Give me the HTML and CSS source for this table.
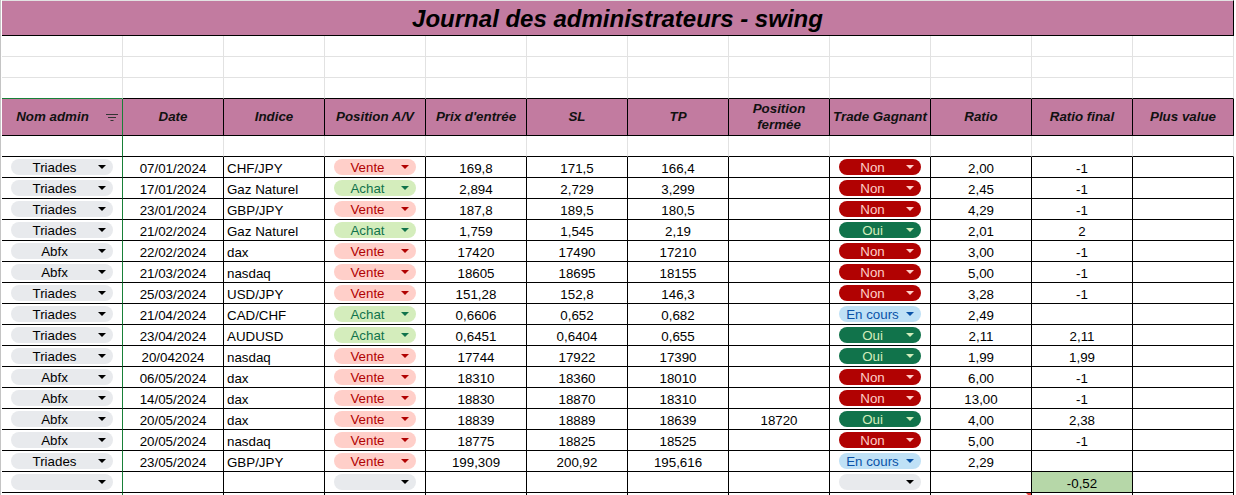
FILE: index.html
```html
<!DOCTYPE html>
<html lang="fr">
<head>
<meta charset="utf-8">
<title>Journal des administrateurs - swing</title>
<link rel="stylesheet" href="styles.css">
</head>
<body>
<div class="sheet">
  <div class="title">Journal des administrateurs - swing</div>

  <div class="row blank"><div class="c"></div><div class="c"></div><div class="c"></div><div class="c"></div><div class="c"></div><div class="c"></div><div class="c"></div><div class="c"></div><div class="c"></div><div class="c"></div><div class="c"></div><div class="c"></div></div>
  <div class="row blank"><div class="c"></div><div class="c"></div><div class="c"></div><div class="c"></div><div class="c"></div><div class="c"></div><div class="c"></div><div class="c"></div><div class="c"></div><div class="c"></div><div class="c"></div><div class="c"></div></div>
  <div class="row blank last"><div class="c hb"></div><div class="c"></div><div class="c"></div><div class="c"></div><div class="c"></div><div class="c"></div><div class="c"></div><div class="c"></div><div class="c"></div><div class="c"></div><div class="c"></div><div class="c"></div></div>

  <div class="row head">
    <div class="c a"><span class="ht">Nom admin</span><svg class="filter" viewBox="0 0 12 7"><path d="M0 0.5h12M2 3.5h8M4.5 6.5h3"/></svg></div>
    <div class="c">Date</div>
    <div class="c">Indice</div>
    <div class="c">Position A/V</div>
    <div class="c">Prix d'entrée</div>
    <div class="c">SL</div>
    <div class="c">TP</div>
    <div class="c">Position<br>fermée</div>
    <div class="c">Trade Gagnant</div>
    <div class="c">Ratio</div>
    <div class="c">Ratio final</div>
    <div class="c">Plus value</div>
  </div>

  <div class="row spacer"><div class="c a"></div><div class="c"></div><div class="c"></div><div class="c"></div><div class="c"></div><div class="c"></div><div class="c"></div><div class="c"></div><div class="c"></div><div class="c"></div><div class="c"></div><div class="c"></div></div>

  <div class="row">
    <div class="c a k"><span class="chip gray"><span class="t">Triades</span><svg class="arr" viewBox="0 0 8 4"><path d="M0 0h8L4 4z"/></svg></span></div>
    <div class="c">07/01/2024</div><div class="c l">CHF/JPY</div>
    <div class="c k"><span class="chip vente"><span class="t">Vente</span><svg class="arr" viewBox="0 0 8 4"><path d="M0 0h8L4 4z"/></svg></span></div>
    <div class="c">169,8</div><div class="c">171,5</div><div class="c">166,4</div><div class="c"></div>
    <div class="c k"><span class="chip non"><span class="t">Non</span><svg class="arr" viewBox="0 0 8 4"><path d="M0 0h8L4 4z"/></svg></span></div>
    <div class="c">2,00</div><div class="c">-1</div><div class="c"></div>
  </div>
  <div class="row">
    <div class="c a k"><span class="chip gray"><span class="t">Triades</span><svg class="arr" viewBox="0 0 8 4"><path d="M0 0h8L4 4z"/></svg></span></div>
    <div class="c">17/01/2024</div><div class="c l">Gaz Naturel</div>
    <div class="c k"><span class="chip achat"><span class="t">Achat</span><svg class="arr" viewBox="0 0 8 4"><path d="M0 0h8L4 4z"/></svg></span></div>
    <div class="c">2,894</div><div class="c">2,729</div><div class="c">3,299</div><div class="c"></div>
    <div class="c k"><span class="chip non"><span class="t">Non</span><svg class="arr" viewBox="0 0 8 4"><path d="M0 0h8L4 4z"/></svg></span></div>
    <div class="c">2,45</div><div class="c">-1</div><div class="c"></div>
  </div>
  <div class="row">
    <div class="c a k"><span class="chip gray"><span class="t">Triades</span><svg class="arr" viewBox="0 0 8 4"><path d="M0 0h8L4 4z"/></svg></span></div>
    <div class="c">23/01/2024</div><div class="c l">GBP/JPY</div>
    <div class="c k"><span class="chip vente"><span class="t">Vente</span><svg class="arr" viewBox="0 0 8 4"><path d="M0 0h8L4 4z"/></svg></span></div>
    <div class="c">187,8</div><div class="c">189,5</div><div class="c">180,5</div><div class="c"></div>
    <div class="c k"><span class="chip non"><span class="t">Non</span><svg class="arr" viewBox="0 0 8 4"><path d="M0 0h8L4 4z"/></svg></span></div>
    <div class="c">4,29</div><div class="c">-1</div><div class="c"></div>
  </div>
  <div class="row">
    <div class="c a k"><span class="chip gray"><span class="t">Triades</span><svg class="arr" viewBox="0 0 8 4"><path d="M0 0h8L4 4z"/></svg></span></div>
    <div class="c">21/02/2024</div><div class="c l">Gaz Naturel</div>
    <div class="c k"><span class="chip achat"><span class="t">Achat</span><svg class="arr" viewBox="0 0 8 4"><path d="M0 0h8L4 4z"/></svg></span></div>
    <div class="c">1,759</div><div class="c">1,545</div><div class="c">2,19</div><div class="c"></div>
    <div class="c k"><span class="chip oui"><span class="t">Oui</span><svg class="arr" viewBox="0 0 8 4"><path d="M0 0h8L4 4z"/></svg></span></div>
    <div class="c">2,01</div><div class="c">2</div><div class="c"></div>
  </div>
  <div class="row">
    <div class="c a k"><span class="chip gray"><span class="t">Abfx</span><svg class="arr" viewBox="0 0 8 4"><path d="M0 0h8L4 4z"/></svg></span></div>
    <div class="c">22/02/2024</div><div class="c l">dax</div>
    <div class="c k"><span class="chip vente"><span class="t">Vente</span><svg class="arr" viewBox="0 0 8 4"><path d="M0 0h8L4 4z"/></svg></span></div>
    <div class="c">17420</div><div class="c">17490</div><div class="c">17210</div><div class="c"></div>
    <div class="c k"><span class="chip non"><span class="t">Non</span><svg class="arr" viewBox="0 0 8 4"><path d="M0 0h8L4 4z"/></svg></span></div>
    <div class="c">3,00</div><div class="c">-1</div><div class="c"></div>
  </div>
  <div class="row">
    <div class="c a k"><span class="chip gray"><span class="t">Abfx</span><svg class="arr" viewBox="0 0 8 4"><path d="M0 0h8L4 4z"/></svg></span></div>
    <div class="c">21/03/2024</div><div class="c l">nasdaq</div>
    <div class="c k"><span class="chip vente"><span class="t">Vente</span><svg class="arr" viewBox="0 0 8 4"><path d="M0 0h8L4 4z"/></svg></span></div>
    <div class="c">18605</div><div class="c">18695</div><div class="c">18155</div><div class="c"></div>
    <div class="c k"><span class="chip non"><span class="t">Non</span><svg class="arr" viewBox="0 0 8 4"><path d="M0 0h8L4 4z"/></svg></span></div>
    <div class="c">5,00</div><div class="c">-1</div><div class="c"></div>
  </div>
  <div class="row">
    <div class="c a k"><span class="chip gray"><span class="t">Triades</span><svg class="arr" viewBox="0 0 8 4"><path d="M0 0h8L4 4z"/></svg></span></div>
    <div class="c">25/03/2024</div><div class="c l">USD/JPY</div>
    <div class="c k"><span class="chip vente"><span class="t">Vente</span><svg class="arr" viewBox="0 0 8 4"><path d="M0 0h8L4 4z"/></svg></span></div>
    <div class="c">151,28</div><div class="c">152,8</div><div class="c">146,3</div><div class="c"></div>
    <div class="c k"><span class="chip non"><span class="t">Non</span><svg class="arr" viewBox="0 0 8 4"><path d="M0 0h8L4 4z"/></svg></span></div>
    <div class="c">3,28</div><div class="c">-1</div><div class="c"></div>
  </div>
  <div class="row">
    <div class="c a k"><span class="chip gray"><span class="t">Triades</span><svg class="arr" viewBox="0 0 8 4"><path d="M0 0h8L4 4z"/></svg></span></div>
    <div class="c">21/04/2024</div><div class="c l">CAD/CHF</div>
    <div class="c k"><span class="chip achat"><span class="t">Achat</span><svg class="arr" viewBox="0 0 8 4"><path d="M0 0h8L4 4z"/></svg></span></div>
    <div class="c">0,6606</div><div class="c">0,652</div><div class="c">0,682</div><div class="c"></div>
    <div class="c k"><span class="chip cours"><span class="t">En cours</span><svg class="arr" viewBox="0 0 8 4"><path d="M0 0h8L4 4z"/></svg></span></div>
    <div class="c">2,49</div><div class="c"></div><div class="c"></div>
  </div>
  <div class="row">
    <div class="c a k"><span class="chip gray"><span class="t">Triades</span><svg class="arr" viewBox="0 0 8 4"><path d="M0 0h8L4 4z"/></svg></span></div>
    <div class="c">23/04/2024</div><div class="c l">AUDUSD</div>
    <div class="c k"><span class="chip achat"><span class="t">Achat</span><svg class="arr" viewBox="0 0 8 4"><path d="M0 0h8L4 4z"/></svg></span></div>
    <div class="c">0,6451</div><div class="c">0,6404</div><div class="c">0,655</div><div class="c"></div>
    <div class="c k"><span class="chip oui"><span class="t">Oui</span><svg class="arr" viewBox="0 0 8 4"><path d="M0 0h8L4 4z"/></svg></span></div>
    <div class="c">2,11</div><div class="c">2,11</div><div class="c"></div>
  </div>
  <div class="row">
    <div class="c a k"><span class="chip gray"><span class="t">Triades</span><svg class="arr" viewBox="0 0 8 4"><path d="M0 0h8L4 4z"/></svg></span></div>
    <div class="c">20/042024</div><div class="c l">nasdaq</div>
    <div class="c k"><span class="chip vente"><span class="t">Vente</span><svg class="arr" viewBox="0 0 8 4"><path d="M0 0h8L4 4z"/></svg></span></div>
    <div class="c">17744</div><div class="c">17922</div><div class="c">17390</div><div class="c"></div>
    <div class="c k"><span class="chip oui"><span class="t">Oui</span><svg class="arr" viewBox="0 0 8 4"><path d="M0 0h8L4 4z"/></svg></span></div>
    <div class="c">1,99</div><div class="c">1,99</div><div class="c"></div>
  </div>
  <div class="row">
    <div class="c a k"><span class="chip gray"><span class="t">Abfx</span><svg class="arr" viewBox="0 0 8 4"><path d="M0 0h8L4 4z"/></svg></span></div>
    <div class="c">06/05/2024</div><div class="c l">dax</div>
    <div class="c k"><span class="chip vente"><span class="t">Vente</span><svg class="arr" viewBox="0 0 8 4"><path d="M0 0h8L4 4z"/></svg></span></div>
    <div class="c">18310</div><div class="c">18360</div><div class="c">18010</div><div class="c"></div>
    <div class="c k"><span class="chip non"><span class="t">Non</span><svg class="arr" viewBox="0 0 8 4"><path d="M0 0h8L4 4z"/></svg></span></div>
    <div class="c">6,00</div><div class="c">-1</div><div class="c"></div>
  </div>
  <div class="row">
    <div class="c a k"><span class="chip gray"><span class="t">Abfx</span><svg class="arr" viewBox="0 0 8 4"><path d="M0 0h8L4 4z"/></svg></span></div>
    <div class="c">14/05/2024</div><div class="c l">dax</div>
    <div class="c k"><span class="chip vente"><span class="t">Vente</span><svg class="arr" viewBox="0 0 8 4"><path d="M0 0h8L4 4z"/></svg></span></div>
    <div class="c">18830</div><div class="c">18870</div><div class="c">18310</div><div class="c"></div>
    <div class="c k"><span class="chip non"><span class="t">Non</span><svg class="arr" viewBox="0 0 8 4"><path d="M0 0h8L4 4z"/></svg></span></div>
    <div class="c">13,00</div><div class="c">-1</div><div class="c"></div>
  </div>
  <div class="row">
    <div class="c a k"><span class="chip gray"><span class="t">Abfx</span><svg class="arr" viewBox="0 0 8 4"><path d="M0 0h8L4 4z"/></svg></span></div>
    <div class="c">20/05/2024</div><div class="c l">dax</div>
    <div class="c k"><span class="chip vente"><span class="t">Vente</span><svg class="arr" viewBox="0 0 8 4"><path d="M0 0h8L4 4z"/></svg></span></div>
    <div class="c">18839</div><div class="c">18889</div><div class="c">18639</div><div class="c">18720</div>
    <div class="c k"><span class="chip oui"><span class="t">Oui</span><svg class="arr" viewBox="0 0 8 4"><path d="M0 0h8L4 4z"/></svg></span></div>
    <div class="c">4,00</div><div class="c">2,38</div><div class="c"></div>
  </div>
  <div class="row">
    <div class="c a k"><span class="chip gray"><span class="t">Abfx</span><svg class="arr" viewBox="0 0 8 4"><path d="M0 0h8L4 4z"/></svg></span></div>
    <div class="c">20/05/2024</div><div class="c l">nasdaq</div>
    <div class="c k"><span class="chip vente"><span class="t">Vente</span><svg class="arr" viewBox="0 0 8 4"><path d="M0 0h8L4 4z"/></svg></span></div>
    <div class="c">18775</div><div class="c">18825</div><div class="c">18525</div><div class="c"></div>
    <div class="c k"><span class="chip non"><span class="t">Non</span><svg class="arr" viewBox="0 0 8 4"><path d="M0 0h8L4 4z"/></svg></span></div>
    <div class="c">5,00</div><div class="c">-1</div><div class="c"></div>
  </div>
  <div class="row">
    <div class="c a k"><span class="chip gray"><span class="t">Triades</span><svg class="arr" viewBox="0 0 8 4"><path d="M0 0h8L4 4z"/></svg></span></div>
    <div class="c">23/05/2024</div><div class="c l">GBP/JPY</div>
    <div class="c k"><span class="chip vente"><span class="t">Vente</span><svg class="arr" viewBox="0 0 8 4"><path d="M0 0h8L4 4z"/></svg></span></div>
    <div class="c">199,309</div><div class="c">200,92</div><div class="c">195,616</div><div class="c"></div>
    <div class="c k"><span class="chip cours"><span class="t">En cours</span><svg class="arr" viewBox="0 0 8 4"><path d="M0 0h8L4 4z"/></svg></span></div>
    <div class="c">2,29</div><div class="c"></div><div class="c"></div>
  </div>
  <div class="row">
    <div class="c a k"><span class="chip gray"><span class="t"></span><svg class="arr" viewBox="0 0 8 4"><path d="M0 0h8L4 4z"/></svg></span></div>
    <div class="c"></div><div class="c"></div>
    <div class="c k"><span class="chip gray"><span class="t"></span><svg class="arr" viewBox="0 0 8 4"><path d="M0 0h8L4 4z"/></svg></span></div>
    <div class="c"></div><div class="c"></div><div class="c"></div><div class="c"></div>
    <div class="c k"><span class="chip gray"><span class="t"></span><svg class="arr" viewBox="0 0 8 4"><path d="M0 0h8L4 4z"/></svg></span></div>
    <div class="c"></div><div class="c total">-0,52</div><div class="c"></div>
  </div>
  <div class="row tail">
    <div class="c a"></div><div class="c"></div><div class="c"></div><div class="c"></div><div class="c"></div><div class="c"></div><div class="c"></div><div class="c"></div><div class="c"></div><div class="c note"></div><div class="c"></div><div class="c"></div>
  </div>
</div>
</body>
</html>
```

FILE: styles.css
```css
html, body {
  overflow: hidden;
}

body {
  margin: 0;
  padding-left: 1px;
  border-left: 1px solid #c4c4c4;
  min-height: 100vh;
  box-sizing: border-box;
  background: #fff;
  color: #000;
  font-family: "Liberation Sans", Arial, sans-serif;
  font-size: 13.333px;
}

.sheet {
  display: flex;
  flex-direction: column;
  width: 1232px;
}

.title {
  height: 36px;
  box-sizing: border-box;
  border-top: 1px solid #e2e2e2;
  border-bottom: 1px solid #000;
  border-right: 1px solid #000;
  padding-top: 1px;
  background: #c27ba0;
  display: flex;
  align-items: center;
  justify-content: center;
  font-size: 24px;
  font-weight: bold;
  font-style: italic;
  color: #000;
}

.row {
  display: grid;
  grid-template-columns: 121px repeat(11, 101px);
  height: 21px;
  flex: none;
}

.c {
  box-sizing: border-box;
  min-width: 0;
  border-right: 1px solid #000;
  border-bottom: 1px solid #000;
  padding-top: 2px;
  display: flex;
  align-items: center;
  justify-content: center;
  white-space: nowrap;
  overflow: hidden;
}

.c.l {
  justify-content: flex-start;
  padding-left: 3px;
}

.c.k {
  padding-top: 0;
}

.blank .c {
  border-color: #e2e2e2;
}

.blank.last .c {
  border-bottom-color: #000;
}

.blank.last .c.hb {
  border-bottom-color: #188038;
}

.spacer .c {
  border-right-color: #e2e2e2;
}

.head {
  height: 37px;
}

.head .c {
  padding-top: 0;
  background: #c27ba0;
  font-weight: bold;
  font-style: italic;
  color: #111;
  white-space: normal;
  text-align: center;
  line-height: 16px;
}

.ht {
  flex: 1;
  text-align: center;
}

.filter {
  width: 12px;
  height: 7px;
  margin: 0 4px 0 3px;
  flex: none;
  stroke: #333;
  stroke-width: 1;
  fill: none;
}

.c.a {
  border-right-color: #188038;
}

.tail .c {
  border-bottom: none;
}

.note {
  position: relative;
}

.note::after {
  content: "";
  position: absolute;
  top: 0;
  right: 0;
  border-top: 5px solid #e53935;
  border-left: 5px solid transparent;
}

.total {
  background: #b6d7a8;
}

.chip {
  flex: 1;
  margin: 0 9px;
  height: 16px;
  border-radius: 8px;
  display: flex;
  align-items: center;
  overflow: hidden;
}

.chip .t {
  flex: 1;
  min-width: 0;
  text-align: center;
  padding-left: 6px;
  padding-top: 1px;
  line-height: 16px;
  white-space: nowrap;
}

.arr {
  width: 8px;
  height: 4px;
  margin: 0 7px 0 6px;
  flex: none;
  fill: currentColor;
}

.gray {
  background: #e8eaed;
  color: #000;
}

.vente {
  background: #ffcfc9;
  color: #b10202;
}

.achat {
  background: #d4edbc;
  color: #11734b;
}

.non {
  background: #b10202;
  color: #ffcfc9;
}

.oui {
  background: #11734b;
  color: #d4edbc;
}

.cours {
  background: #bfe1f6;
  color: #0a53a8;
}
```
